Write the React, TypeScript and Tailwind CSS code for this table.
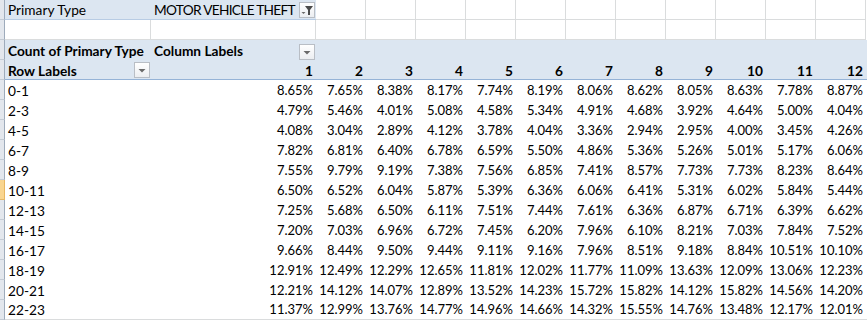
import React from "react";

const DATA: [string, string[]][] = [
  ["0-1", ["8.65%", "7.65%", "8.38%", "8.17%", "7.74%", "8.19%", "8.06%", "8.62%", "8.05%", "8.63%", "7.78%", "8.87%"]],
  ["2-3", ["4.79%", "5.46%", "4.01%", "5.08%", "4.58%", "5.34%", "4.91%", "4.68%", "3.92%", "4.64%", "5.00%", "4.04%"]],
  ["4-5", ["4.08%", "3.04%", "2.89%", "4.12%", "3.78%", "4.04%", "3.36%", "2.94%", "2.95%", "4.00%", "3.45%", "4.26%"]],
  ["6-7", ["7.82%", "6.81%", "6.40%", "6.78%", "6.59%", "5.50%", "4.86%", "5.36%", "5.26%", "5.01%", "5.17%", "6.06%"]],
  ["8-9", ["7.55%", "9.79%", "9.19%", "7.38%", "7.56%", "6.85%", "7.41%", "8.57%", "7.73%", "7.73%", "8.23%", "8.64%"]],
  ["10-11", ["6.50%", "6.52%", "6.04%", "5.87%", "5.39%", "6.36%", "6.06%", "6.41%", "5.31%", "6.02%", "5.84%", "5.44%"]],
  ["12-13", ["7.25%", "5.68%", "6.50%", "6.11%", "7.51%", "7.44%", "7.61%", "6.36%", "6.87%", "6.71%", "6.39%", "6.62%"]],
  ["14-15", ["7.20%", "7.03%", "6.96%", "6.72%", "7.45%", "6.20%", "7.96%", "6.10%", "8.21%", "7.03%", "7.84%", "7.52%"]],
  ["16-17", ["9.66%", "8.44%", "9.50%", "9.44%", "9.11%", "9.16%", "7.96%", "8.51%", "9.18%", "8.84%", "10.51%", "10.10%"]],
  ["18-19", ["12.91%", "12.49%", "12.29%", "12.65%", "11.81%", "12.02%", "11.77%", "11.09%", "13.63%", "12.09%", "13.06%", "12.23%"]],
  ["20-21", ["12.21%", "14.12%", "14.07%", "12.89%", "13.52%", "14.23%", "15.72%", "15.82%", "14.12%", "15.82%", "14.56%", "14.20%"]],
  ["22-23", ["11.37%", "12.99%", "13.76%", "14.77%", "14.96%", "14.66%", "14.32%", "15.55%", "14.76%", "13.48%", "12.17%", "12.01%"]],
];

const MONTHS = ["2", "3", "4", "5", "6", "7", "8", "9", "10", "11", "12"];

function Gutter({ selected = false }: { selected?: boolean }) {
  return (
    <div
      className={
        "w-[5px] h-[20px] shrink-0 border-r border-b " +
        (selected ? "bg-[#f9d58f] border-r-[#e8b660] border-b-[#e3b869]" : "bg-[#e3e7ed] border-r-[#9eabbb] border-b-[#c4cbd4]")
      }
    />
  );
}

function DropButton({ filter = false }: { filter?: boolean }) {
  return (
    <div className="w-[16px] h-[16px] shrink-0 border border-[#b9bec5] bg-gradient-to-b from-[#ffffff] to-[#eceef1] flex items-center justify-center">
      {filter ? (
        <svg width="14" height="14" viewBox="0 0 14 14">
          <polygon points="1.5,9 5.5,9 3.5,11" fill="#6a6a6a" />
          <polygon points="5,3 13,3 10,7 10,12 8,12 8,7" fill="#4a4a4a" />
        </svg>
      ) : (
        <svg width="14" height="14" viewBox="0 0 14 14">
          <polygon points="3.5,6 10.5,6 7,9.5" fill="#6a6a6a" />
        </svg>
      )}
    </div>
  );
}

const cellText = "leading-[15px] whitespace-nowrap";
const numText = "leading-[15px] whitespace-nowrap text-[13px]";

export default function App() {
  return (
    <div
      className="w-[867px] h-[321px] bg-white text-black overflow-hidden text-[13.7px]"
      style={{ fontFamily: "Lato, 'Open Sans', sans-serif" }}
    >
      {/* Row 1 */}
      <div className="flex h-[20px]">
        <Gutter />
        <div className="w-[146px] h-[20px] shrink-0 bg-[#dce6f1] border-b border-[#b8cce4] flex items-end pl-[3px] pb-[2px]">
          <span className={cellText}>Primary Type</span>
        </div>
        <div className="w-[165px] h-[20px] shrink-0 bg-[#dce6f1] border-b border-[#b8cce4] flex items-end pl-[3px] pb-[2px] relative">
          <span className={cellText + " tracking-[-0.7px]"}>MOTOR VEHICLE THEFT</span>
          <div className="absolute right-[1px] top-[2px]">
            <DropButton filter />
          </div>
        </div>
        {Array.from({ length: 11 }).map((_, i) => (
          <div key={i} className="w-[50px] h-[20px] shrink-0 border-r border-b border-[#dadcdd]" />
        ))}
      </div>
      {/* Row 2 */}
      <div className="flex h-[20px]">
        <Gutter />
        <div className="w-[146px] h-[20px] shrink-0 border-r border-b border-[#dadcdd]" />
        <div className="w-[165px] h-[20px] shrink-0 border-r border-b border-[#dadcdd]" />
        {Array.from({ length: 11 }).map((_, i) => (
          <div key={i} className="w-[50px] h-[20px] shrink-0 border-r border-b border-[#dadcdd]" />
        ))}
      </div>
      {/* Row 3 */}
      <div className="flex h-[20px]">
        <Gutter />
        <div className="flex flex-1 h-[20px] bg-[#dce6f1] font-bold">
          <div className="w-[146px] shrink-0 flex items-end pl-[3px] pb-[2px]">
            <span className={cellText}>Count of Primary Type</span>
          </div>
          <div className="w-[165px] shrink-0 flex items-end pl-[3px] pb-[2px] relative">
            <span className={cellText}>Column Labels</span>
            <div className="absolute right-[1px] top-[4px]">
              <DropButton />
            </div>
          </div>
        </div>
      </div>
      {/* Row 4 */}
      <div className="flex h-[20px]">
        <Gutter />
        <div className="flex flex-1 h-[20px] bg-[#dce6f1] font-bold border-b border-[#95b3d7]">
          <div className="w-[146px] shrink-0 flex items-end pl-[3px] pb-[1px] relative">
            <span className={cellText}>Row Labels</span>
            <div className="absolute right-[1px] top-[2px]">
              <DropButton />
            </div>
          </div>
          <div className="w-[165px] shrink-0 flex items-end justify-end pr-[3px] pb-[1px]">
            <span className={cellText}>1</span>
          </div>
          {MONTHS.map((m) => (
            <div key={m} className="w-[50px] shrink-0 flex items-end justify-end pr-[3px] pb-[1px]">
              <span className={cellText}>{m}</span>
            </div>
          ))}
        </div>
      </div>
      {/* Data rows */}
      {DATA.map(([label, vals], ri) => (
        <div key={label} className="flex h-[20px]">
          <Gutter selected={ri === 5} />
          <div className={"flex flex-1 h-[20px] " + (ri === DATA.length - 1 ? "border-b border-[#dadcdd]" : "")}>
            <div className="w-[146px] shrink-0 flex items-end pl-[3px] pb-[2px]">
              <span className={cellText}>{label}</span>
            </div>
            <div className="w-[165px] shrink-0 flex items-end justify-end pr-[3px] pb-[2px]">
              <span className={numText}>{vals[0]}</span>
            </div>
            {vals.slice(1).map((v, i) => (
              <div key={i} className="w-[50px] shrink-0 flex items-end justify-end pr-[3px] pb-[2px]">
                <span className={numText}>{v}</span>
              </div>
            ))}
          </div>
        </div>
      ))}
    </div>
  );
}
